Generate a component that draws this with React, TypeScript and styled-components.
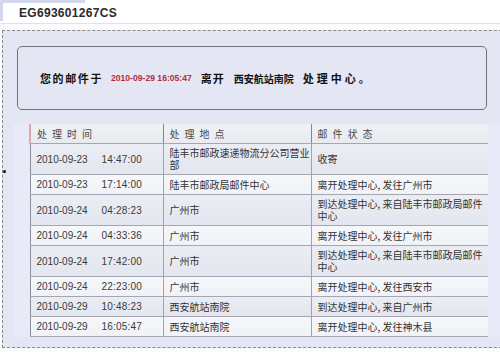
import React from "react";
import styled, { createGlobalStyle } from "styled-components";

const GlobalStyle = createGlobalStyle`
  html, body { margin: 0; padding: 0; overflow: hidden; }
  body {
    background: #fbfbfd;
    font-family: "Liberation Sans", "Noto Sans CJK SC", sans-serif;
    width: 500px;
    height: 352px;
  }
`;

const Page = styled.div`
  position: relative;
  width: 500px;
  height: 352px;
  overflow: hidden;
`;

const TopBar = styled.div`
  height: 24px;
  border-bottom: 1px solid #e2e2e6;
  box-sizing: border-box;
  background: #ffffff;
`;

const Tab = styled.div`
  width: 85px;
  height: 21px;
  border-top: 3px solid #d3d8ee;
  border-left: 3px solid #d3d8ee;
  box-sizing: border-box;
  display: flex;
  align-items: center;
  padding-left: 16px;
  padding-top: 1px;
`;

const Title = styled.span`
  font-family: "Liberation Sans", Arial, sans-serif;
  font-weight: bold;
  font-size: 12px;
  color: #2b2b2b;
  white-space: nowrap;
  letter-spacing: 0.3px;
`;

const Panel = styled.div`
  margin: 6px 0 0 2px;
  width: 540px;
  height: 318px;
  box-sizing: border-box;
  border: 1px dashed #8a8a8a;
  border-right: none;
  background: #e4e7f3;
  padding-top: 15px;
`;

const MessageBox = styled.div`
  margin-left: 14px;
  width: 470px;
  height: 64px;
  box-sizing: border-box;
  border: 1px solid #70727e;
  border-radius: 5px;
  display: flex;
  align-items: center;
  padding-left: 22px;
  font-family: "Noto Sans CJK SC", sans-serif;
  font-weight: bold;
  font-size: 11px;
  color: #111;
`;

const Msg = styled.span<{ $gap?: number; $ls?: number; $size?: number }>`
  margin-left: ${(p) => p.$gap ?? 0}px;
  letter-spacing: ${(p) => p.$ls ?? 1}px;
  font-size: ${(p) => p.$size ?? 11}px;
  white-space: nowrap;
`;

const DateRed = styled.span`
  margin-left: 8px;
  font-family: "Liberation Sans", Arial, sans-serif;
  font-weight: bold;
  font-size: 8.6px;
  color: #b82a42;
  white-space: nowrap;
`;

const TableWrap = styled.div`
  margin: 14px 0 0 10px;
  padding-left: 16px;
  width: 472px;
  background: #e8ebf7;
`;

const Table = styled.table`
  width: 458px;
  border-collapse: collapse;
  table-layout: fixed;
  font-family: "Noto Sans CJK SC", sans-serif;
  font-size: 10px;
  color: #333;
  border-left: 1px solid #8c8e9c;
`;

const Th = styled.th<{ $first?: boolean }>`
  text-align: left;
  font-weight: normal;
  color: #4a4a4a;
  letter-spacing: 5px;
  line-height: 12px;
  height: 12px;
  padding: 4px 6px 3px 6px;
  background: linear-gradient(#f0f1f5, #e8eaf0);
  border-bottom: 1px solid #a4a6b2;
  border-left: ${(p) => (p.$first ? "2px solid #dba8a8" : "1px solid #c86a6a")};
  white-space: nowrap;
`;

const Tr = styled.tr<{ $alt: boolean }>`
  background: ${(p) =>
    p.$alt
      ? "linear-gradient(#f6f7fa, #f1f2f7)"
      : "linear-gradient(#ebedf4, #e4e6ef)"};
`;

const Td = styled.td<{ $sep?: boolean; $pr?: number }>`
  vertical-align: middle;
  line-height: 12px;
  padding: 3px ${(p) => p.$pr ?? 6}px 3px 6px;
  border-bottom: 1px solid #a4a6b2;
  border-left: ${(p) => (p.$sep ? "1px solid #a0a2b0" : "none")};
  word-break: break-all;
`;

const DateText = styled.span`
  display: inline-block;
  width: 65px;
  font-family: "Liberation Sans", Arial, sans-serif;
  font-size: 10px;
  color: #3a3a3a;
`;

const TimeText = styled.span`
  font-family: "Liberation Sans", Arial, sans-serif;
  font-size: 10px;
  color: #3a3a3a;
  letter-spacing: 0.2px;
`;

const Bullet = styled.span`
  position: absolute;
  left: 3px;
  top: 170px;
  width: 3px;
  height: 3px;
  border-radius: 50%;
  background: #111;
`;

const rows = [
  ["2010-09-23", "14:47:00", "陆丰市邮政速递物流分公司营业部", "收寄"],
  ["2010-09-23", "17:14:00", "陆丰市邮政局邮件中心", "离开处理中心, 发往广州市"],
  ["2010-09-24", "04:28:23", "广州市", "到达处理中心, 来自陆丰市邮政局邮件中心"],
  ["2010-09-24", "04:33:36", "广州市", "离开处理中心, 发往广州市"],
  ["2010-09-24", "17:42:00", "广州市", "到达处理中心, 来自陆丰市邮政局邮件中心"],
  ["2010-09-24", "22:23:00", "广州市", "离开处理中心, 发往西安市"],
  ["2010-09-29", "10:48:23", "西安航站南院", "到达处理中心, 来自广州市"],
  ["2010-09-29", "16:05:47", "西安航站南院", "离开处理中心, 发往神木县"],
];

export default function App() {
  return (
    <>
      <GlobalStyle />
      <Page>
        <TopBar>
          <Tab>
            <Title>EG693601267CS</Title>
          </Tab>
        </TopBar>
        <Panel>
          <MessageBox>
            <Msg $ls={1.6}>您的邮件于</Msg>
            <DateRed>2010-09-29 16:05:47</DateRed>
            <Msg $gap={9} $ls={1}>离开</Msg>
            <Msg $gap={9} $ls={0} $size={10}>西安航站南院</Msg>
            <Msg $gap={9} $ls={3}>处理中心。</Msg>
          </MessageBox>
          <TableWrap>
            <Table>
              <colgroup>
                <col style={{ width: 133 }} />
                <col style={{ width: 148 }} />
                <col style={{ width: 177 }} />
              </colgroup>
              <thead>
                <tr>
                  <Th $first>处理时间</Th>
                  <Th>处理地点</Th>
                  <Th>邮件状态</Th>
                </tr>
              </thead>
              <tbody>
                {rows.map((r, i) => (
                  <Tr key={i} $alt={i % 2 === 1}>
                    <Td>
                      <DateText>{r[0]}</DateText>
                      <TimeText>{r[1]}</TimeText>
                    </Td>
                    <Td $sep $pr={0}>{r[2]}</Td>
                    <Td $sep $pr={2}>{r[3]}</Td>
                  </Tr>
                ))}
              </tbody>
            </Table>
          </TableWrap>
        </Panel>
        <Bullet />
      </Page>
    </>
  );
}
